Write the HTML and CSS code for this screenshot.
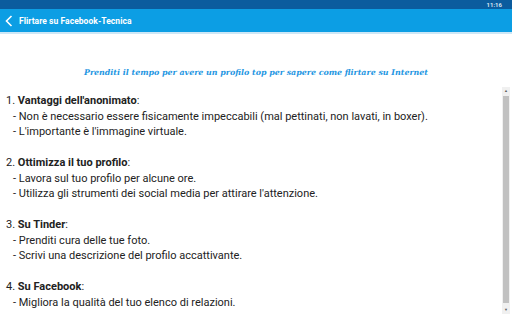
FILE: index.html
```html
<!DOCTYPE html>
<html>
<head>
    <title>Flirtare su Facebook-Tecnica</title>
    <link rel="stylesheet" href="styles.css">
</head>
<body>
    <div class="status-bar">
        <span class="clock">11:16</span>
    </div>
    <div class="app-bar">
        <svg class="back" width="8" height="12" viewBox="0 0 8 12">
            <polyline points="6.5,1 1.5,6 6.5,11" fill="none" stroke="#ffffff" stroke-width="1.6"/>
        </svg>
        <span class="app-title">Flirtare su Facebook-Tecnica</span>
    </div>

    <div class="intro">Prenditi il tempo per avere un profilo top per sapere come flirtare su Internet</div>

    <div class="panel">
        <div class="article">
            <div class="section">
                <div>1. <b>Vantaggi dell'anonimato</b>:</div>
                <div class="item">- Non è necessario essere fisicamente impeccabili (mal pettinati, non lavati, in boxer).</div>
                <div class="item">- L'importante è l'immagine virtuale.</div>
            </div>
            <div class="section">
                <div>2. <b>Ottimizza il tuo profilo</b>:</div>
                <div class="item">- Lavora sul tuo profilo per alcune ore.</div>
                <div class="item">- Utilizza gli strumenti dei social media per attirare l'attenzione.</div>
            </div>
            <div class="section">
                <div>3. <b>Su Tinder</b>:</div>
                <div class="item">- Prenditi cura delle tue foto.</div>
                <div class="item">- Scrivi una descrizione del profilo accattivante.</div>
            </div>
            <div class="section">
                <div>4. <b>Su Facebook</b>:</div>
                <div class="item">- Migliora la qualità del tuo elenco di relazioni.</div>
            </div>
        </div>
        <div class="scrollbar">
            <div class="arrow">&#9650;</div>
            <div class="thumb"></div>
            <div class="arrow">&#9660;</div>
        </div>
    </div>
</body>
</html>
```

FILE: styles.css
```css
body {
    margin: 0;
    font-family: Roboto, "Liberation Sans", sans-serif;
    background-color: #ffffff;
    color: #222222;
}
.status-bar {
    height: 9px;
    background-color: #0b5c9e;
    display: flex;
    justify-content: flex-end;
    align-items: center;
    padding-right: 10px;
}
.clock {
    font-size: 6px;
    font-weight: bold;
    color: #d6e6f2;
}
.app-bar {
    height: 23px;
    background-color: #0c9ee4;
    border-bottom: 2px solid #cde7f6;
    display: flex;
    align-items: center;
    gap: 6px;
    padding-left: 5px;
}
.app-title {
    color: #ffffff;
    font-size: 8.5px;
    font-weight: bold;
    letter-spacing: 0.05px;
}
.intro {
    margin-top: 34px;
    text-align: center;
    font-family: "DejaVu Serif", serif;
    font-style: italic;
    font-weight: bold;
    font-size: 7.9px;
    color: #1e96e2;
}
.panel {
    display: flex;
    margin-top: 10px;
    height: 227px;
}
.article {
    flex: 1;
    padding: 6px 0 0 6px;
    font-size: 11px;
    line-height: 15.5px;
}
.section {
    margin-bottom: 15.5px;
}
.item {
    padding-left: 7px;
}
.scrollbar {
    width: 8px;
    margin-right: 2px;
    background-color: #f0f0f0;
    display: flex;
    flex-direction: column;
}
.arrow {
    height: 8px;
    font-size: 4px;
    line-height: 8px;
    text-align: center;
    color: #606060;
}
.thumb {
    flex: 1;
    margin: 1px 1px 3px;
    background-color: #c1c1c1;
}
```
